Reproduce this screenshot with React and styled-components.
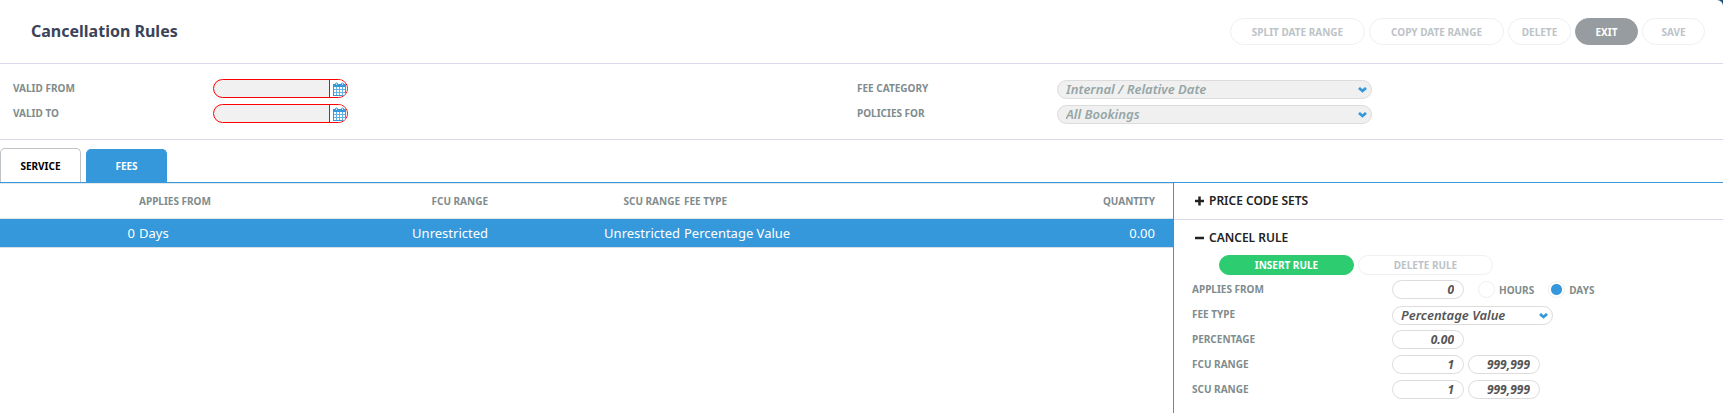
import React, { useState } from "react";
import styled, { createGlobalStyle } from "styled-components";

const c = {
  blue: "#3498db", line: "#dadaec", border: "#dcdcdc", label: "#7f8c8d",
  disabled: "#f1f1f1", muted: "#bdc3c7", red: "#ff0000", green: "#2ecc71",
};

const Global = createGlobalStyle`
  *, *::before, *::after { box-sizing: border-box; }
  body { margin: 0; background: #1f4e74; font-family: "Noto Sans", "Open Sans", sans-serif; }
  button, input, select { font-family: inherit; margin: 0; }
`;

const Page = styled.div`
  display: flex; flex-direction: column; min-height: 100vh;
  background: #fff; border-top-right-radius: 6px;
`;
const Header = styled.header`
  display: flex; align-items: center; justify-content: space-between;
  height: 64px; padding: 0 18px 0 31px; border-bottom: 1px solid ${c.line};
`;
const Title = styled.h1`
  margin: 0; padding-bottom: 2px; font-size: 16px; line-height: 24px; font-weight: 700; color: #3b4358;
`;
const Actions = styled.div`display: flex; gap: 4px;`;
const Pill = styled.button`
  width: ${(p) => (p.$wide ? 135 : 63)}px; height: ${(p) => (p.$small ? 20 : 27)}px;
  padding: 0; border-radius: 14px; font-size: 10px; line-height: 14px; font-weight: 700;
  white-space: nowrap;
  border: 1px solid ${(p) => p.$fill || "#ecf0f1"};
  background: ${(p) => p.$fill || "#fff"};
  color: ${(p) => (p.$fill ? "#fff" : c.muted)};
`;

const Filters = styled.section`
  display: grid; grid-template-columns: 844fr 866fr; align-items: start;
  padding: 15px 0 16px 13px; border-bottom: 1px solid ${c.line};
`;
const Fields = styled.div`display: flex; flex-direction: column; gap: 6px;`;
const Row = styled.div`display: flex; align-items: center; height: 19px;`;
const Label = styled.label`
  width: 200px; flex: none; padding-bottom: 2px;
  font-size: 10px; line-height: 14px; font-weight: 700; color: ${c.label};
`;
const DateBox = styled.div`
  display: flex; width: 135px; height: 19px; overflow: hidden;
  border: 1px solid ${c.red}; border-radius: 10px; background: ${c.disabled};
`;
const DateInput = styled.input`
  flex: 1; min-width: 0; border: 0; padding: 0 9px; background: transparent; outline: 0;
  font-size: 12px; font-weight: 700; font-style: italic;
`;
const DateButton = styled.button`
  display: flex; align-items: center; justify-content: flex-end; width: 18px; padding: 0 1px 0 0;
  border: 0; border-left: 1px solid ${c.red}; background: #fff;
`;
const SelectBox = styled.div`
  position: relative; width: ${(p) => p.$w}px; height: 19px; margin-top: 2px;
  border: 1px solid ${c.border}; border-radius: 10px;
  background: ${(p) => (p.$disabled ? "#f0f0f0" : "#fff")};
  svg { position: absolute; right: 4px; top: 6px; pointer-events: none; }
`;
const Select = styled.select`
  appearance: none; display: block; width: 100%; height: 19px; margin-top: -2px; padding: 0 20px 0 8px;
  border: 0; background: transparent; color: #555; opacity: 1;
  font-size: 13px; line-height: 18px; font-weight: 600; font-style: italic;
  &:disabled { color: #95a5a6; opacity: 1; }
`;
const NumberInput = styled.input`
  width: 72px; height: 19px; padding: 0 9px; border: 1px solid ${c.border}; border-radius: 10px;
  background: #fff; color: #555; text-align: right;
  font-size: 12px; line-height: 16px; font-weight: 700; font-style: italic;
  & + & { margin-left: 4px; }
`;

const Tabs = styled.div`
  display: flex; align-items: flex-end; gap: 5px; height: 43px; border-bottom: 1px solid ${c.blue};
`;
const Tab = styled.button`
  width: 81px; height: ${(p) => (p.$active ? 33 : 34)}px; padding: 0; border-radius: 5px 5px 0 0;
  font-size: 10px; line-height: 14px; font-weight: 700;
  border: 1px solid ${(p) => (p.$active ? c.blue : c.muted)}; border-bottom: 0;
  background: ${(p) => (p.$active ? c.blue : "#fff")}; color: ${(p) => (p.$active ? "#fff" : "#000")};
`;
const Body = styled.div`display: flex; flex: 1;`;
const Main = styled.main`flex: 1; min-width: 0;`;
const Table = styled.table`
  width: 100%; border-collapse: separate; border-spacing: 0; table-layout: fixed;
  border-top: 1px solid #e4e8ea;
`;
const Th = styled.th`
  height: 35px; padding: 0 ${(p) => p.$pr || 0}px 1px 0; border-bottom: 1px solid #e0e4e6;
  text-align: ${(p) => p.$align || "left"};
  font-size: 10px; line-height: 14px; font-weight: 700; color: ${c.label};
`;
const Td = styled.td`
  height: 29px; padding: 0 ${(p) => p.$pr || 0}px 0 0; border-bottom: 1px solid #d8dfe4;
  background: ${c.blue}; color: #fff; text-align: ${(p) => p.$align || "left"};
  font-size: 13px; line-height: 18px; white-space: nowrap;
`;
const Col = styled.col`width: ${(p) => p.$w}px;`;
const Side = styled.aside`width: 550px; border-left: 1px solid ${c.blue};`;
const SectionHead = styled.button`
  display: flex; align-items: center; gap: 5px; width: 100%;
  height: ${(p) => (p.$open ? 35 : 37)}px; padding: 0 0 0 21px;
  border: 0; border-bottom: ${(p) => (p.$open ? "0" : `1px solid ${c.line}`)};
  background: #fff; color: #222; text-align: left;
  font-size: 12px; line-height: 16px; font-weight: 600;
`;
const SideBody = styled.div`padding-left: 18px;`;
const RuleButtons = styled.div`display: flex; gap: 4px; padding: 0 0 5px 27px;`;
const RadioLabel = styled.label`
  display: flex; align-items: center; gap: 4px; margin-left: 14px;
  font-size: 10px; line-height: 14px; font-weight: 700; color: ${c.label};
`;
const Radio = styled.input`
  appearance: none; width: 17px; height: 17px; margin: 0; border-radius: 50%;
  border: 1px solid #ecf0f1; background: #fff;
  &:checked { background: radial-gradient(circle, ${c.blue} 5px, #fff 6px); }
`;

const CalendarIcon = () => (
  <svg width="13" height="14" viewBox="0 0 13 14" aria-hidden="true">
    <path d="M0 2h13v12H0z" fill={c.blue} />
    <path d="M1 5h11v8H1z" fill="#fff" />
    <path d="M3.500 5v8M6.500 5v8M9.500 5v8M1 7.500h11M1 10.500h11" stroke={c.blue} strokeWidth="1" opacity="0.75" />
    <path d="M2.500 1.500q1 -1 2 0v2h-2zM8.500 1.500q1 -1 2 0v2h-2z" fill="#cfe6f7" stroke={c.blue} strokeWidth="1" />
  </svg>
);
const Chevron = () => (
  <svg width="9" height="6" viewBox="0 0 9 6" aria-hidden="true">
    <path d="M1 1l3.500 3L8 1" fill="none" stroke={c.blue} strokeWidth="2.800" />
  </svg>
);
const Sign = ({ plus }) => (
  <svg width="9" height="10" viewBox="0 0 9 10" aria-hidden="true">
    <path d={plus ? "M0 5h9M4.500 0.500v9" : "M0 5h9"} stroke="#222" strokeWidth="2.500" />
  </svg>
);

function DateField({ id, label }) {
  return (
    <Row>
      <Label htmlFor={id}>{label}</Label>
      <DateBox>
        <DateInput id={id} type="text" />
        <DateButton type="button" aria-label={`Choose ${label.toLowerCase()} date`}><CalendarIcon /></DateButton>
      </DateBox>
    </Row>
  );
}

function SelectField({ id, label, value, width, disabled }) {
  return (
    <Row>
      <Label htmlFor={id}>{label}</Label>
      <SelectBox $w={width} $disabled={disabled}>
        <Select id={id} disabled={disabled}><option>{value}</option></Select>
        <Chevron />
      </SelectBox>
    </Row>
  );
}

function NumberField({ id, label, values, children }) {
  return (
    <Row>
      <Label htmlFor={id}>{label}</Label>
      {values.map((v, i) => (
        <NumberInput key={i} id={i ? `${id}-to` : id} aria-label={i ? `${label} to` : undefined} defaultValue={v} />
      ))}
      {children}
    </Row>
  );
}

export default function App() {
  const [unit, setUnit] = useState("DAYS");
  return (
    <Page>
      <Global />
      <Header>
        <Title>Cancellation Rules</Title>
        <Actions>
          <Pill $wide disabled>SPLIT DATE RANGE</Pill>
          <Pill $wide disabled>COPY DATE RANGE</Pill>
          <Pill disabled>DELETE</Pill>
          <Pill $fill="#979ca0">EXIT</Pill>
          <Pill disabled>SAVE</Pill>
        </Actions>
      </Header>
      <Filters>
        <Fields>
          <DateField id="valid-from" label="VALID FROM" />
          <DateField id="valid-to" label="VALID TO" />
        </Fields>
        <Fields>
          <SelectField id="fee-category" label="FEE CATEGORY" value="Internal / Relative Date" width={315} disabled />
          <SelectField id="policies-for" label="POLICIES FOR" value="All Bookings" width={315} disabled />
        </Fields>
      </Filters>
      <Tabs role="tablist">
        <Tab role="tab" aria-selected="false">SERVICE</Tab>
        <Tab role="tab" aria-selected="true" $active>FEES</Tab>
      </Tabs>
      <Body>
        <Main>
          <Table>
            <colgroup>
              <Col $w={139} />
              <Col $w={154} />
              <Col $w={195} />
              <Col $w={196} />
              <col />
              <Col $w={196} />
            </colgroup>
            <thead>
              <tr>
                <Th />
                <Th>APPLIES FROM</Th>
                <Th $align="right">FCU RANGE</Th>
                <Th $align="right" $pr={4}>SCU RANGE</Th>
                <Th>FEE TYPE</Th>
                <Th $align="right" $pr={18}>QUANTITY</Th>
              </tr>
            </thead>
            <tbody>
              <tr>
                <Td $align="right" $pr={4}>0</Td>
                <Td>Days</Td>
                <Td $align="right">Unrestricted</Td>
                <Td $align="right" $pr={4}>Unrestricted</Td>
                <Td>Percentage Value</Td>
                <Td $align="right" $pr={18}>0.00</Td>
              </tr>
            </tbody>
          </Table>
        </Main>
        <Side>
          <SectionHead type="button" aria-expanded="false"><Sign plus />PRICE CODE SETS</SectionHead>
          <SectionHead type="button" aria-expanded="true" $open><Sign />CANCEL RULE</SectionHead>
          <SideBody>
            <RuleButtons>
              <Pill $wide $small $fill={c.green}>INSERT RULE</Pill>
              <Pill $wide $small disabled>DELETE RULE</Pill>
            </RuleButtons>
            <Fields>
              <NumberField id="applies-from" label="APPLIES FROM" values={["0"]}>
                {["HOURS", "DAYS"].map((u) => (
                  <RadioLabel key={u}>
                    <Radio type="radio" name="unit" checked={unit === u} onChange={() => setUnit(u)} />{u}
                  </RadioLabel>
                ))}
              </NumberField>
              <SelectField id="fee-type" label="FEE TYPE" value="Percentage Value" width={161} />
              <NumberField id="percentage" label="PERCENTAGE" values={["0.00"]} />
              <NumberField id="fcu" label="FCU RANGE" values={["1", "999,999"]} />
              <NumberField id="scu" label="SCU RANGE" values={["1", "999,999"]} />
            </Fields>
          </SideBody>
        </Side>
      </Body>
    </Page>
  );
}
